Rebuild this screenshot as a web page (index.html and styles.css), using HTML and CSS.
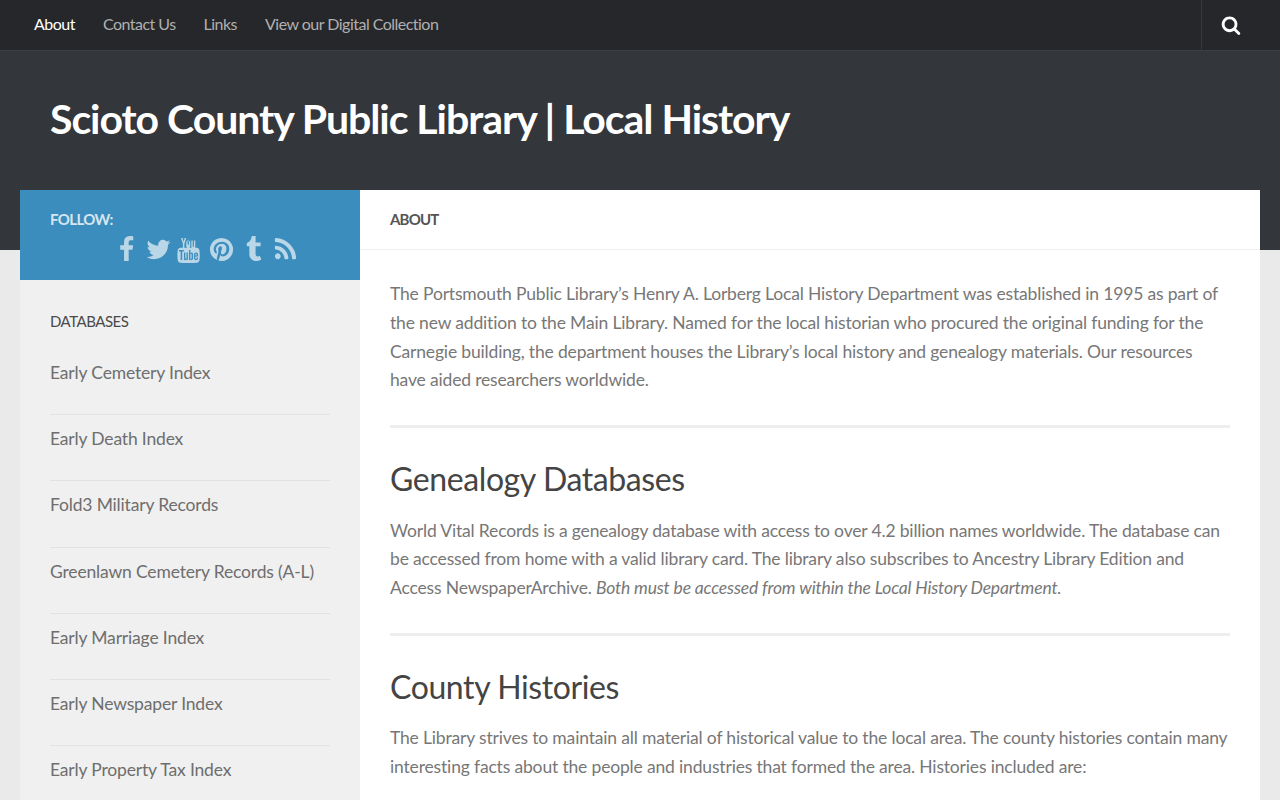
FILE: index.html
```html
<!DOCTYPE html>
<html lang="en">
<head>
<meta charset="utf-8">
<title>Scioto County Public Library | Local History</title>
<link rel="stylesheet" href="styles.css">
</head>
<body>
<div class="page">
<header class="masthead">
  <nav class="topbar">
    <ul class="topnav">
      <li><a class="current" href="#">About</a></li>
      <li><a href="#">Contact Us</a></li>
      <li><a href="#">Links</a></li>
      <li><a href="#">View our Digital Collection</a></li>
    </ul>
    <button class="search" aria-label="Search">
      <svg class="search-icon" viewBox="0 0 1792 1792"><path d="M1216 832q0-185-131.5-316.5t-316.5-131.5-316.5 131.5-131.5 316.5 131.5 316.5 316.5 131.5 316.5-131.5 131.5-316.5zm512 832q0 52-38 90t-90 38q-54 0-90-38l-343-342q-179 124-399 124-143 0-273.5-55.5t-225-150-150-225-55.5-273.5 55.5-273.5 150-225 225-150 273.5-55.5 273.5 55.5 225 150 150 225 55.5 273.5q0 220-124 399l343 343q37 37 37 90z"/></svg>
    </button>
  </nav>
  <div class="brand"><h1 class="site-title">Scioto County Public Library | Local History</h1></div>
</header>
<div class="wrap">
  <aside class="sidebar">
    <div class="follow">
      <div class="follow-label">FOLLOW:</div>
      <div class="social">
        <svg viewBox="0 0 1792 1792"><path d="M1343 12v264h-157q-86 0-116 36t-30 108v189h293l-39 296h-254v759h-306v-759h-255v-296h255v-218q0-186 104-288.5t277-102.5q147 0 228 12z"/></svg>
        <svg viewBox="0 0 1792 1792"><path d="M1684 408q-67 98-162 167 1 14 1 42 0 130-38 259.5t-115.5 248.5-184.5 210.5-258 146-323 54.5q-271 0-496-145 35 4 76 4 225 0 401-138-105-2-188-64.5t-114-159.5q33 5 61 5 43 0 85-11-112-23-185.5-111.5t-73.5-205.5v-4q68 38 146 41-66-44-105-115t-39-154q0-88 44-163 121 149 294.5 238.5t371.5 99.5q-8-38-8-74 0-134 94.5-228.5t228.5-94.5q140 0 236 102 109-21 205-78-37 115-142 178 99-11 198-54z"/></svg>
        <svg viewBox="0 0 1792 1792"><path d="M971 1244v211q0 67-39 67-23 0-45-22v-301q22-22 45-22 39 0 39 67zm338 1v46h-90v-46q0-68 45-68t45 68zm-966-218h107v-94h-312v94h105v569h100v-569zm288 569h89v-494h-89v378q-30 42-57 42-18 0-21-21-1-3-1-35v-364h-89v391q0 49 8 73 12 37 58 37 48 0 102-61v54zm429-148v-197q0-73-9-99-17-56-71-56-50 0-93 54v-217h-89v663h89v-48q45 55 93 55 54 0 71-55 9-27 9-100zm338-10v-13h-91q0 51-2 61-7 36-40 36-46 0-46-69v-87h179v-103q0-79-27-116-39-51-106-51-68 0-107 51-28 37-28 116v173q0 79 29 116 39 51 108 51 72 0 108-53 18-27 21-54 2-9 2-58zm-608-913v-210q0-69-43-69t-43 69v210q0 70 43 70t43-70zm719 751q0 234-26 350-14 59-58 99t-102 46q-184 21-555 21t-555-21q-58-6-102.5-46t-57.5-99q-26-112-26-350 0-234 26-350 14-59 58-99t103-47q183-20 554-20t555 20q58 7 102.5 47t57.5 99q26 112 26 350zm-1000-1150h102l-121 399v271h-100v-271q-14-74-61-212-37-103-65-187h106l71 263zm370 333v175q0 81-28 118-38 51-106 51-67 0-105-51-28-38-28-118v-175q0-80 28-117 38-51 105-51 68 0 106 51 28 37 28 117zm335-162v499h-91v-55q-53 62-103 62-46 0-59-37-8-24-8-75v-394h91v367q0 33 1 35 3 22 21 22 27 0 57-43v-381h91z"/></svg>
        <svg viewBox="0 0 1792 1792"><path d="M1664 896q0 209-103 385.5t-279.5 279.5-385.5 103q-111 0-218-32 59-93 78-164 9-34 54-211 20 39 73 67.5t114 28.5q121 0 216-68.5t147-188.5 52-270q0-114-59.5-214t-172.5-163-255-63q-105 0-196 29t-154.5 77-109 110.5-67 129.5-21.5 134q0 104 40 183t117 111q30 12 38-20 2-7 8-31t8-30q6-23-11-43-51-61-51-151 0-151 104.5-259.5t273.5-108.5q151 0 235.5 82t84.5 213q0 170-68.5 289t-175.5 119q-61 0-98-43.5t-23-104.5q8-35 26.5-93.5t30-103 11.5-75.5q0-50-27-83t-77-33q-62 0-105 57t-43 142q0 73 25 122l-99 418q-17 70-13 177-206-91-333-281t-127-423q0-209 103-385.5t279.5-279.5 385.5-103 385.5 103 279.5 279.5 103 385.5z"/></svg>
        <svg viewBox="0 0 1792 1792"><path d="M1328 1329l80 237q-23 35-111 66t-177 32q-104 2-190.5-26t-142.5-74-95-106-55.5-120-16.5-118v-544h-168v-215q72-26 129-69.5t91-90 58-102 34-99 15-88.5q1-5 4.5-8.5t7.5-3.5h244v424h333v252h-334v518q0 30 6.5 56t22.5 52.5 49.5 41.5 81.5 14q78-2 134-29z"/></svg>
        <svg viewBox="0 0 1792 1792"><path d="M576 1344q0 80-56 136t-136 56-136-56-56-136 56-136 136-56 136 56 56 136zm512 123q2 28-17 48-18 21-47 21h-135q-25 0-43-16.5t-20-41.5q-22-229-184.5-391.5t-391.5-184.5q-25-2-41.5-20t-16.5-43v-135q0-29 21-47 17-17 43-17h5q160 13 306 80.5t259 181.5q114 113 181.5 259t80.5 306zm512 2q2 27-18 47-18 20-46 20h-143q-26 0-44.5-17.5t-19.5-42.5q-12-215-101-408.5t-231.5-336-336-231.5-408.5-102q-25-1-42.5-19.5t-17.5-43.5v-143q0-28 20-46 18-18 44-18h3q262 13 501.5 120t425.5 294q187 186 294 425.5t120 501.5z"/></svg>
      </div>
    </div>
    <div class="widget">
      <h3 class="widget-title">DATABASES</h3>
      <ul class="links">
        <li><a href="#">Early Cemetery Index</a></li>
        <li><a href="#">Early Death Index</a></li>
        <li><a href="#">Fold3 Military Records</a></li>
        <li><a href="#">Greenlawn Cemetery Records (A-L)</a></li>
        <li><a href="#">Early Marriage Index</a></li>
        <li><a href="#">Early Newspaper Index</a></li>
        <li><a href="#">Early Property Tax Index</a></li>
      </ul>
    </div>
  </aside>
  <main class="content">
    <div class="page-title">ABOUT</div>
    <article class="entry">
      <p>The Portsmouth Public Library’s Henry A. Lorberg Local History Department was established in 1995 as part of the new addition to the Main Library. Named for the local historian who procured the original funding for the Carnegie building, the department houses the Library’s local history and genealogy materials. Our resources have aided researchers worldwide.</p>
      <hr>
      <h2>Genealogy Databases</h2>
      <p>World Vital Records is a genealogy database with access to over 4.2 billion names worldwide. The database can be accessed from home with a valid library card. The library also subscribes to Ancestry Library Edition and Access NewspaperArchive. <em>Both must be accessed from within the Local History Department.</em></p>
      <hr>
      <h2>County Histories</h2>
      <p>The Library strives to maintain all material of historical value to the local area. The county histories contain many interesting facts about the people and industries that formed the area. Histories included are:</p>
    </article>
  </main>
</div>
</div>
</body>
</html>
```
FILE: styles.css
```css
* { box-sizing: border-box; }
html, body { margin: 0; padding: 0; }
body { background: #eaeaea; color: #777; font-family: Lato, "Open Sans", sans-serif; font-size: 17.5px; line-height: 28.8px; letter-spacing: -0.165px; }
a { color: inherit; text-decoration: none; }
ul { list-style: none; margin: 0; padding: 0; }
.page { height: 800px; overflow: hidden; }

.masthead { background: #33363b; height: 250px; }
.topbar { display: flex; justify-content: space-between; height: 51px; background: #26272b; border-bottom: 1px solid #3c3e43; }
.topnav { display: flex; padding-left: 20px; }
.topnav a { display: block; padding: 0 14px; font-size: 16px; letter-spacing: -0.52px; line-height: 48px; color: #b0b0b0; }
.topnav a.current { color: #fff; }
.search { width: 60px; height: 50px; margin-right: 19px; padding: 0 1px 0 0; background: none; border: 0; border-left: 1px solid #36383c; display: flex; align-items: center; justify-content: center; }
.search-icon { width: 20px; height: 20px; fill: #fff; }

.brand { padding: 43px 50px 0; }
.site-title { margin: 0; font-size: 41px; letter-spacing: -1.05px; line-height: 50px; font-weight: 700; color: #fff; }

.wrap { display: flex; margin: -60px 20px 0; position: relative; }
.sidebar { width: 340px; flex: none; background: #f0f0f0; min-height: 700px; }
.follow { height: 90px; background: #3b8dbd; padding: 15px 30px 0; }
.follow-label { font-size: 15px; letter-spacing: -0.6px; line-height: 28px; font-weight: 700; color: rgba(255,255,255,.8); }
.social { display: flex; gap: 4.8px; padding-left: 63px; padding-top: 3px; }
.social svg { width: 27px; height: 27px; fill: rgba(255,255,255,.65); flex: none; }

.widget { padding: 26px 30px 0; }
.widget-title { margin: 0 0 13px; font-size: 15px; letter-spacing: -0.5px; line-height: 30px; font-weight: 400; color: #4a4a4a; }
.links li { padding: 10px 0 26.4px; border-bottom: 1px solid #e2e2e2; color: #6e6e6e; }

.content { flex: 1; background: #fff; }
.page-title { height: 60px; padding: 0 30px; border-bottom: 1px solid #eee; font-size: 15px; letter-spacing: -0.8px; font-weight: 700; line-height: 59px; color: #555; }
.entry { padding: 30px 30px 0; }
.entry p { margin: 0; }
.entry hr { height: 3px; margin: 30px 0 29px; border: 0; background: #eee; }
.entry h2 { margin: 0 0 15.4px; font-size: 32px; letter-spacing: -0.4px; line-height: 44px; font-weight: 400; color: #444; }
```
